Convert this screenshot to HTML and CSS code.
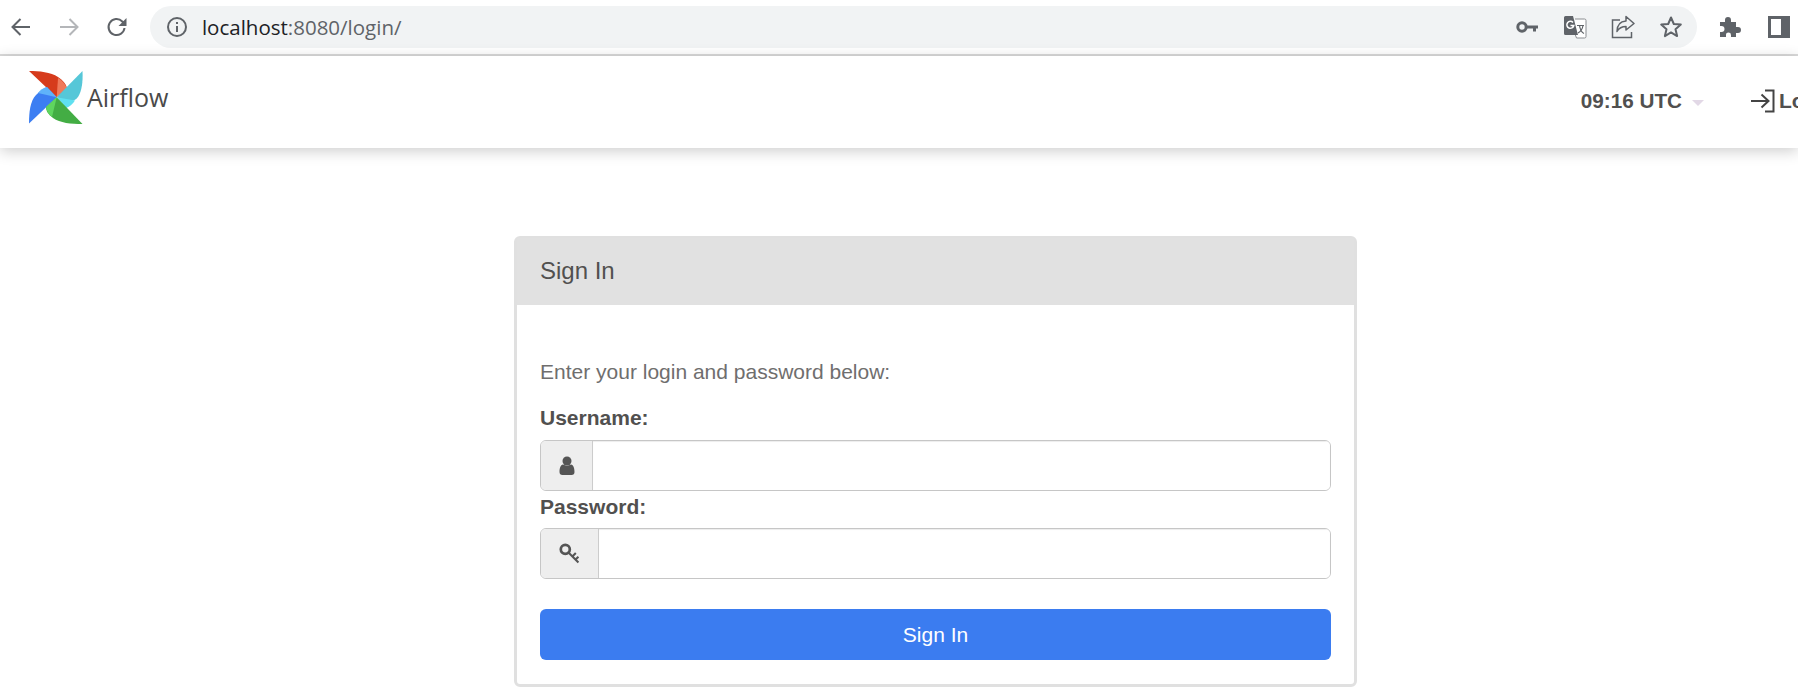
FILE: index.html
```html
<!DOCTYPE html>
<html lang="en">
<head>
    <meta charset="UTF-8">
    <title>Airflow</title>
    <link rel="stylesheet" href="styles.css">
</head>
<body>
    <div class="browser-bar">
        <div class="nav-btns">
            <svg class="ic" width="24" height="24" viewBox="0 0 24 24"><path d="M21 12H4M11.500 4L3.500 12l8 8" fill="none" stroke="#5f6368" stroke-width="2"/></svg>
            <svg class="ic" width="24" height="24" viewBox="0 0 24 24"><path d="M3 12h17M12.500 4l8 8-8 8" fill="none" stroke="#b4b6b9" stroke-width="2"/></svg>
            <svg class="ic" width="24" height="24" viewBox="0 0 24 24"><path d="M19.500 13a8 8 0 1 1-2.200-6.500L20 9" fill="none" stroke="#5f6368" stroke-width="2"/><path d="M21.500 3v8h-8z" fill="#5f6368"/></svg>
        </div>
        <div class="address">
            <svg width="22" height="22" viewBox="0 0 22 22"><circle cx="11" cy="11" r="9" fill="none" stroke="#5f6368" stroke-width="2"/><path d="M10 10h2v6h-2zM10 6h2v2h-2z" fill="#5f6368"/></svg>
            <span class="url"><span class="host">localhost</span>:8080/login/</span>
            <span class="spacer"></span>
            <svg class="addr-ic" width="24" height="24" viewBox="0 0 24 24"><circle cx="7" cy="12" r="4.200" fill="none" stroke="#5f6368" stroke-width="3"/><path d="M11 10.500h12v3h-2v3h-3v-3h-7z" fill="#5f6368"/></svg>
            <svg class="addr-ic" width="24" height="24" viewBox="0 0 24 24"><path d="M12 4h9.500a1.500 1.500 0 0 1 1.500 1.500v16a1.500 1.500 0 0 1-1.500 1.500h-8l-1.500-4" fill="#fff" stroke="#8a8d91"/><path d="M2.500 1h7.500l5 19H2.500A1.500 1.500 0 0 1 1 18.500v-16A1.500 1.500 0 0 1 2.500 1z" fill="#5f6368"/><path d="M10 7.500a3.500 3.500 0 1 0 .8 3H7.500" fill="none" stroke="#fff" stroke-width="1.500"/><path d="M14 10.500h7M16.500 10.500c.5 3.500 2.500 7 4.500 8M20 10.500c-.5 3.500-2.500 6-5 7.500" fill="none" stroke="#5f6368" stroke-width="1.200"/></svg>
            <svg class="addr-ic" width="24" height="24" viewBox="0 0 24 24"><path d="M9 5H1.500v17.500h19V17" fill="none" stroke="#5f6368" stroke-width="1.500"/><path d="M15 1.500L23 8.500l-8 6.500v-3.500c-4.500 0-7 1.500-9 5 0-6 3-10 9-10.500z" fill="none" stroke="#5f6368" stroke-width="1.500" stroke-linejoin="round"/></svg>
            <svg class="addr-ic" width="24" height="24" viewBox="0 0 24 24"><path d="M12 2.500l2.800 6.500 7 .6-5.300 4.600 1.600 6.900-6.100-3.700-6.100 3.700 1.600-6.900-5.300-4.600 7-.6z" fill="none" stroke="#5f6368" stroke-width="2" stroke-linejoin="round"/></svg>
        </div>
        <svg class="puzzle" width="24" height="24" viewBox="0 0 24 24"><path d="M2 7h5V5a3 3 0 0 1 6 0v2h5v5h2a3 3 0 0 1 0 6h-2v4h-5v-2a2.500 2.500 0 0 0-5 0v2H2v-5h1.500a3 3 0 0 0 0-6H2z" fill="#5f6368"/></svg>
        <svg class="side" width="22" height="22" viewBox="0 0 22 22"><path d="M0 0h22v22H0zM3 3v16h10V3z" fill="#5f6368" fill-rule="evenodd"/></svg>
    </div>

    <nav class="navbar">
        <div class="brand">
            <svg class="logo" width="54" height="54" viewBox="0 0 54 54">
                <path d="M0 0C10 0 22 1 29 6C34 9 37 13 38 17L27.700 26.300Z" fill="#d63b1c"/>
                <path d="M29 7C33 9 36 13 38 17L27.700 26.300Z" fill="#ef7a5b"/>
                <path d="M53.500 0C54 10 53 20 49 26C46 30 42 31 37 30L27.700 26.300Z" fill="#56c7d8"/>
                <path d="M27.700 26.300L46 29.500C44 33 40 36 37 37Z" fill="#5fe0f0"/>
                <path d="M0 52.500C0 42 1 30 7 24C11 20 15 17 18 16L27.700 26.300Z" fill="#3c7ef2"/>
                <path d="M9 22C11 19 14 17 18 16L27.700 26.300Z" fill="#5fb2fa"/>
                <path d="M53.500 53C42 53 31 52 24 47C19 43 17 40 17 36L27.700 26.300Z" fill="#43ad44"/>
                <path d="M17 36C18 41 20 44 23 46L27.700 26.300Z" fill="#5fd55f"/>
            </svg>
            <span class="brand-name">Airflow</span>
        </div>
        <div class="nav-right">
            <span class="clock">09:16 UTC</span>
            <span class="caret"></span>
            <a class="login" href="#">
                <svg width="26" height="24" viewBox="0 0 26 24"><path d="M15 1.500h8.500v21H15" fill="none" stroke="#444" stroke-width="2"/><path d="M1 12h17M11.500 5.500l7 6.500-7 6.500" fill="none" stroke="#444" stroke-width="2"/></svg>
                Log In
            </a>
        </div>
    </nav>

    <div class="container">
        <div class="panel">
            <div class="panel-heading">Sign In</div>
            <form class="panel-body">
                <p class="hint">Enter your login and password below:</p>
                <label class="field-label" for="username">Username:</label>
                <div class="input-group">
                    <span class="addon addon-user">
                        <svg width="16" height="19" viewBox="0 0 16 19"><circle cx="8" cy="5" r="4.500" fill="#555"/><path d="M0.500 16c0-4 1-7 3.500-7.500 2.500 1.500 5.500 1.500 8 0 2.500.5 3.500 3.500 3.500 7.500 0 2-1 3-3 3H3.500c-2 0-3-1-3-3z" fill="#555"/></svg>
                    </span>
                    <input id="username" type="text">
                </div>
                <label class="field-label label-gap" for="password">Password:</label>
                <div class="input-group">
                    <span class="addon addon-key">
                        <svg width="21" height="21" viewBox="0 0 20 20"><circle cx="6" cy="6" r="4.300" fill="none" stroke="#555" stroke-width="2.600"/><path d="M9 9l9.500 9.500M12.500 13l3.500-3.500M15.500 16l3-3" fill="none" stroke="#555" stroke-width="2"/></svg>
                    </span>
                    <input id="password" type="password">
                </div>
                <button class="btn-signin" type="button">Sign In</button>
            </form>
        </div>
    </div>
</body>
</html>
```

FILE: styles.css
```css
html, body {
    margin: 0;
    padding: 0;
    overflow: hidden;
}
body {
    font-family: "Liberation Sans", Arial, sans-serif;
    background-color: #fff;
    color: #444;
}
.browser-bar {
    height: 54px;
    border-bottom: 2px solid #dadada;
    display: flex;
    align-items: center;
    padding: 0 8px 0 9px;
}
.nav-btns {
    display: flex;
    gap: 24px;
    width: 141px;
    margin-top: -1px;
}
.address {
    width: 1548px;
    height: 42px;
    background-color: #f1f3f4;
    border-radius: 21px;
    display: flex;
    align-items: center;
    padding-left: 16px;
    box-sizing: border-box;
    padding-right: 14px;
}
.url {
    font-family: "Open Sans", sans-serif;
    font-size: 20.500px;
    color: #5f6368;
    margin-left: 14px;
}
.host {
    color: #202124;
}
.spacer {
    flex: 1;
}
.addr-ic {
    margin-left: 24px;
}
.puzzle {
    margin-left: 21px;
}
.side {
    margin-left: 26px;
}
.navbar {
    height: 92px;
    display: flex;
    justify-content: space-between;
    background-color: #fff;
    box-shadow: 0 3px 14px rgba(0, 0, 0, 0.2);
    position: relative;
}
.brand {
    display: flex;
    align-items: flex-start;
    padding: 15px 0 0 29px;
}
.logo {
    flex-shrink: 0;
}
.brand-name {
    font-family: "Open Sans", sans-serif;
    font-size: 25px;
    line-height: 34px;
    color: #4a4a4a;
    margin: 9px 0 0 4px;
}
.nav-right {
    display: flex;
    align-items: center;
    flex-shrink: 0;
    margin-right: -44px;
    padding-bottom: 2px;
}
.clock {
    font-size: 20.700px;
    font-weight: bold;
    color: #51504f;
}
.caret {
    width: 0;
    height: 0;
    border-left: 6px solid transparent;
    border-right: 6px solid transparent;
    border-top: 6px solid #e2d8e6;
    margin: 3px 46px 0 10px;
}
.login {
    display: flex;
    align-items: center;
    gap: 3px;
    font-size: 21px;
    font-weight: bold;
    color: #51504f;
    text-decoration: none;
}
.container {
    padding: 88px 0 0 514px;
}
.panel {
    width: 843px;
    box-sizing: border-box;
    border: 3px solid #e0e0e0;
    border-radius: 6px;
}
.panel-heading {
    background-color: #e1e1e1;
    height: 67px;
    line-height: 66px;
    margin-top: -1px;
    padding-left: 23px;
    font-size: 24px;
    color: #51504f;
}
.panel-body {
    padding: 53px 23px 24px;
}
.hint {
    margin: 0 0 20px;
    font-size: 21px;
    line-height: 27px;
    color: #6f6e6e;
}
.field-label {
    display: block;
    font-size: 21px;
    font-weight: bold;
    line-height: 26px;
    color: #51504f;
    margin-bottom: 9px;
}
.label-gap {
    margin-top: 3px;
    margin-bottom: 8px;
}
.input-group {
    display: flex;
    height: 51px;
    box-sizing: border-box;
    border: 1px solid #c6c6c6;
    border-radius: 6px;
    overflow: hidden;
}
.addon {
    display: flex;
    align-items: center;
    justify-content: center;
    background-color: #eee;
    border-right: 1px solid #ccc;
    flex-shrink: 0;
}
.addon-user {
    width: 51px;
}
.addon-key {
    width: 57px;
}
.input-group input {
    flex: 1;
    border: none;
    outline: none;
    min-width: 0;
    box-shadow: inset 0 1px 1px rgba(0, 0, 0, 0.075);
}
.btn-signin {
    display: block;
    width: 100%;
    height: 51px;
    margin-top: 30px;
    border: none;
    border-radius: 6px;
    background-color: #3b7cf0;
    color: #fff;
    font-family: "Liberation Sans", Arial, sans-serif;
    font-size: 21px;
    cursor: pointer;
}
```
